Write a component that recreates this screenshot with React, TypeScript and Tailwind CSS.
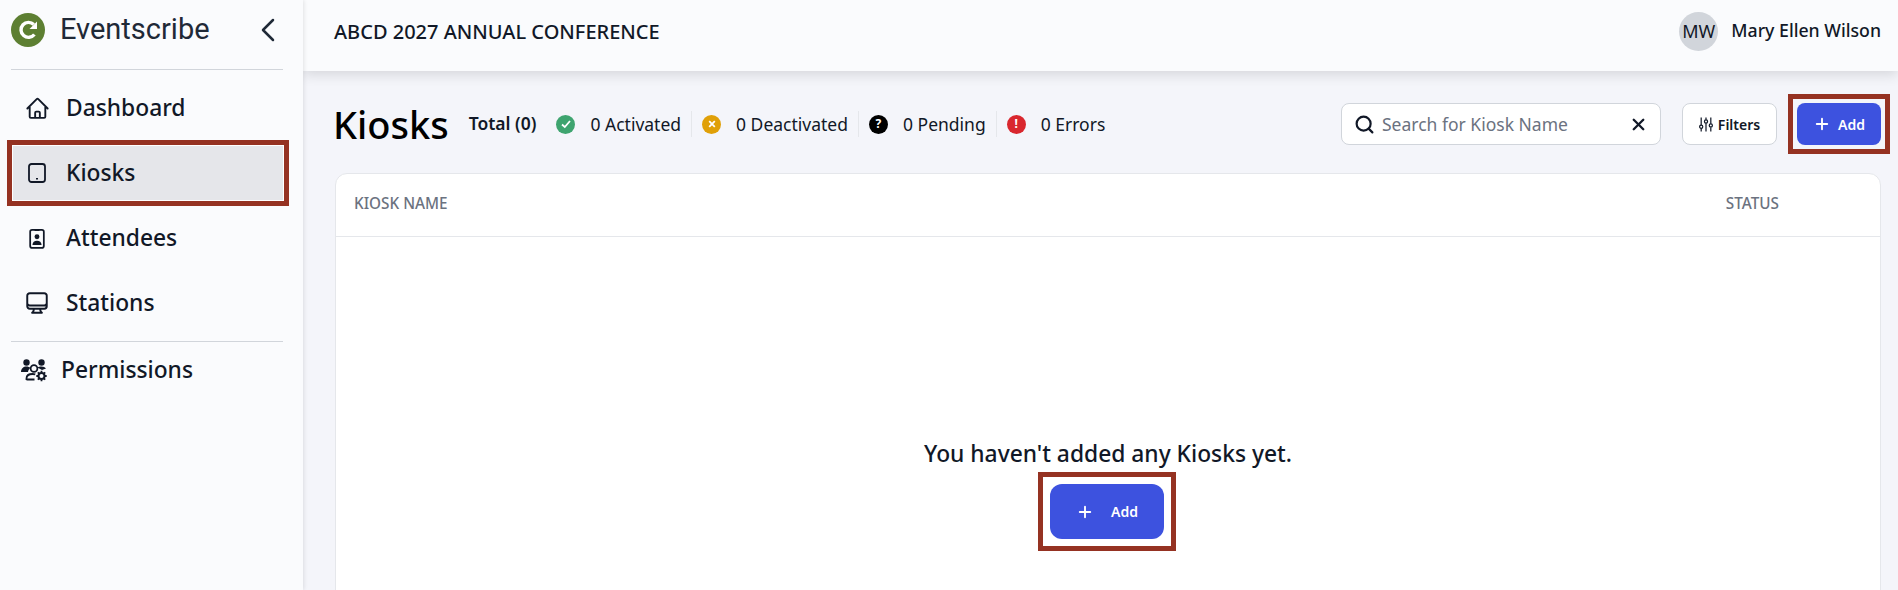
import React from 'react';
import { HiOutlineHome, HiOutlineComputerDesktop } from 'react-icons/hi2';
import { LuSearch, LuX, LuPlus, LuChevronLeft } from 'react-icons/lu';

const TabletIcon = () => (
  <svg viewBox="0 0 18 20" className="w-[18px] h-[20px]" fill="none" stroke="currentColor">
    <rect x="1" y="1" width="16" height="18" rx="2.500" strokeWidth="1.800" />
    <path d="M8 15.800h2" strokeWidth="1.400" />
  </svg>
);

const BadgeIcon = () => (
  <svg viewBox="0 0 18 24" className="w-[16px] h-[21px]" fill="none">
    <rect x="1.200" y="2.200" width="15.600" height="20.600" rx="2.200" stroke="currentColor" strokeWidth="2" />
    <rect x="6" y="1" width="6" height="2.400" rx="1" fill="currentColor" />
    <circle cx="9" cy="10" r="2.800" fill="currentColor" />
    <path d="M3.800 19.500c0-3.400 2.200-5 5.200-5s5.200 1.600 5.200 5z" fill="currentColor" />
  </svg>
);

const FilterIcon = () => (
  <svg viewBox="0 0 16 18" className="w-[14px] h-[17px]" fill="none" stroke="currentColor" strokeWidth="1.400">
    <path d="M2.500 1v8.500M2.500 13.500V17M8 1v2.500M8 7.500V17M13.500 1v7M13.500 12v5" />
    <circle cx="2.500" cy="11.500" r="1.800" />
    <circle cx="8" cy="5.500" r="1.800" />
    <circle cx="13.500" cy="10" r="1.800" />
  </svg>
);

const PermissionsIcon = () => (
  <svg viewBox="0 0 26 24" className="w-[26px] h-[24px]" fill="currentColor">
    <circle cx="5.500" cy="4.500" r="3.200" />
    <circle cx="20.500" cy="4.500" r="3.200" />
    <path d="M0 14c0-3.500 2.500-5.500 5.500-5.500 1.500 0 3 .5 3.800 1.500-1.300 1-2 2.200-2.300 4z" />
    <path d="M16.500 9.500c1-.7 2.500-1 4-1 2 0 3.500.8 4.500 2l-4 1.500z" />
    <circle cx="13" cy="10.500" r="3.400" fill="none" stroke="currentColor" strokeWidth="1.800" />
    <path d="M5.500 22v-1.500c0-2.800 2.500-4.500 6-4.500 1 0 2 .1 2.800.4M5.500 21.500h8" fill="none" stroke="currentColor" strokeWidth="1.800" />
    <circle cx="20.500" cy="18" r="3" fill="none" stroke="currentColor" strokeWidth="2" />
    <path d="M20.500 12.800v2M20.500 21.200v2M15.300 18h2M23.700 18h2M16.800 14.300l1.400 1.400M22.800 20.300l1.400 1.400M24.200 14.300l-1.400 1.400M18.200 20.300l-1.400 1.400" fill="none" stroke="currentColor" strokeWidth="1.800" />
  </svg>
);

const navItems = [
  { label: 'Dashboard', icon: <HiOutlineHome className="w-[25px] h-[25px]" strokeWidth={1.800} /> },
  { label: 'Kiosks', icon: <TabletIcon />, active: true },
  { label: 'Attendees', icon: <BadgeIcon /> },
  { label: 'Stations', icon: <HiOutlineComputerDesktop className="w-[26px] h-[26px]" strokeWidth={1.800} /> },
];

const statuses = [
  {
    label: '0 Activated',
    color: 'bg-[#3ea46f]',
    mark: <svg viewBox="0 0 10 10" className="w-[10px] h-[10px]" fill="none" stroke="currentColor" strokeWidth="1.800"><path d="M1 5.500l2.800 2.500L9 2" /></svg>,
  },
  {
    label: '0 Deactivated',
    color: 'bg-[#e0a008]',
    mark: <svg viewBox="0 0 10 10" className="w-[8px] h-[8px]" fill="none" stroke="currentColor" strokeWidth="2.200"><path d="M1.500 1.500l7 7M8.500 1.500l-7 7" /></svg>,
  },
  { label: '0 Pending', color: 'bg-black', mark: '?' },
  { label: '0 Errors', color: 'bg-[#d9272e]', mark: '!' },
];

const App: React.FC = () => {
  return (
    <div className="flex w-[1898px] h-[590px] overflow-hidden bg-[#f4f5fa] text-[#111827] font-['Noto_Sans',sans-serif]">
      <aside className="relative z-20 w-[303px] shrink-0 bg-[#fafbfd] shadow-[1px_0_4px_rgba(0,0,0,0.1)] pl-[11px] pr-[20px]">
        <div className="flex items-center h-[70px] pb-[10px] border-b border-[#d1d5db]">
          <svg viewBox="0 0 34 34" className="w-[34px] h-[34px] shrink-0">
            <circle cx="17" cy="17" r="17" fill="#5d7f32" />
            <path d="M22.800 11.500a7.500 7.500 0 1 0 .6 10" fill="none" stroke="#fff" strokeWidth="3.400" />
            <path d="M26 8.500v7.500h-7.500z" fill="#fff" />
          </svg>
          <span className="ml-[15px] text-[29px] text-[#1f2937] font-['Roboto',sans-serif] leading-none">Eventscribe</span>
          <LuChevronLeft className="ml-auto -mr-[5px] w-[40px] h-[40px] text-[#1f2937]" strokeWidth={1.500} />
        </div>
        <nav className="pt-[10px] flex flex-col gap-[9px]">
          {navItems.map((item) => (
            <div
              key={item.label}
              className={
                item.active
                  ? 'flex items-center h-[56px] w-[272px] ml-px pl-[11px] bg-[#e5e6ea] border border-white outline-[5px] outline-solid outline-[#953222] text-[22.800px] font-medium'
                  : 'flex items-center h-[56px] pl-[13px] text-[22.800px] font-medium'
              }
            >
              <span className="w-[26px] flex justify-center">{item.icon}</span>
              <span className="ml-[16px] pt-px">{item.label}</span>
            </div>
          ))}
        </nav>
        <div className="mt-[10px] border-t border-[#d1d5db] flex items-center h-[56px] pl-[10px] text-[22.800px] font-medium">
          <PermissionsIcon />
          <span className="ml-[14px] pt-px">Permissions</span>
        </div>
      </aside>

      <div className="flex-1 flex flex-col min-w-0">
        <header className="relative z-10 h-[71px] shrink-0 bg-[#fafbfd] shadow-[0_4px_12px_rgba(0,0,0,0.12)] flex items-center pl-[31px] pr-[17px] pb-[8px]">
          <span className="text-[20px] font-medium">ABCD 2027 ANNUAL CONFERENCE</span>
          <div className="ml-auto flex items-center gap-[13px]">
            <div className="w-[39px] h-[39px] rounded-full bg-[#d1d5db] flex items-center justify-center text-[18px]">MW</div>
            <span className="text-[17.700px] font-medium -mt-[2px]">Mary Ellen Wilson</span>
          </div>
        </header>

        <main className="flex-1 pl-[32px] pr-[17px] min-h-0">
          <div className="flex items-center h-[102px] pt-[4px]">
            <h1 className="-ml-[2px] text-[38px] font-medium text-black leading-none">Kiosks</h1>
            <span className="ml-[20px] text-[17.500px] font-semibold -mt-[2px]">Total (0)</span>
            <div className="ml-[20px] flex items-center">
              {statuses.map((s, i) => (
                <div key={s.label} className={i === 3 ? 'flex items-center' : 'flex items-center pr-[10px] mr-[10px] border-r border-[#e5e7eb] h-[26px]'}>
                  <span className={`w-[19px] h-[19px] rounded-full ${s.color} text-white text-[12px] font-bold flex items-center justify-center leading-none`}>{s.mark}</span>
                  <span className="ml-[15px] text-[17.500px]">{s.label}</span>
                </div>
              ))}
            </div>
            <div className="ml-auto flex items-center">
              <div className="w-[320px] h-[42px] bg-white border border-[#d1d5db] rounded-lg flex items-center pl-[12px] pr-[12px]">
                <LuSearch className="w-[21px] h-[21px] text-[#111827]" strokeWidth={2.500} />
                <span className="ml-[7px] text-[17.500px] text-[#6b7280]">Search for Kiosk Name</span>
                <LuX className="ml-auto w-[19px] h-[19px] text-[#111827]" strokeWidth={3} />
              </div>
              <button className="ml-[21px] w-[95px] h-[42px] bg-white border border-[#d1d5db] rounded-lg flex items-center justify-center gap-[5px] text-[14px] font-semibold">
                <FilterIcon />
                Filters
              </button>
              {/* the red frames are square annotations, so they sit on a wrapper and not on the rounded button */}
              <div className="ml-[20px] outline-[5px] outline-solid outline-[#953222] outline-offset-[4px]">
                <button className="w-[84px] h-[42px] bg-[#3d52df] text-white rounded-lg flex items-center justify-center gap-[7px] text-[14px] font-semibold">
                  <LuPlus className="w-[18px] h-[18px]" strokeWidth={2.500} />
                  Add
                </button>
              </div>
            </div>
          </div>

          <section className="h-[500px] bg-white border border-[#e5e7eb] rounded-xl">
            <div className="flex items-center justify-between h-[63px] border-b border-[#e5e7eb] pl-[18px] pr-[101px] pb-[3px] text-[15.300px] font-medium text-[#6b7280]">
              <span>KIOSK NAME</span>
              <span>STATUS</span>
            </div>
            <div className="flex flex-col items-center pt-[202px]">
              <p className="text-[22.800px] font-medium leading-[30px]">You haven't added any Kiosks yet.</p>
              <div className="-ml-[2px] mt-[15px] outline-[5px] outline-solid outline-[#953222] outline-offset-[7px]">
                <button className="w-[114px] h-[55px] bg-[#3d52df] text-white rounded-xl flex items-center justify-center gap-[17px] text-[14px] font-semibold">
                  <LuPlus className="w-[18px] h-[18px]" strokeWidth={2.500} />
                  Add
                </button>
              </div>
            </div>
          </section>
        </main>
      </div>
    </div>
  );
};

export default App;
